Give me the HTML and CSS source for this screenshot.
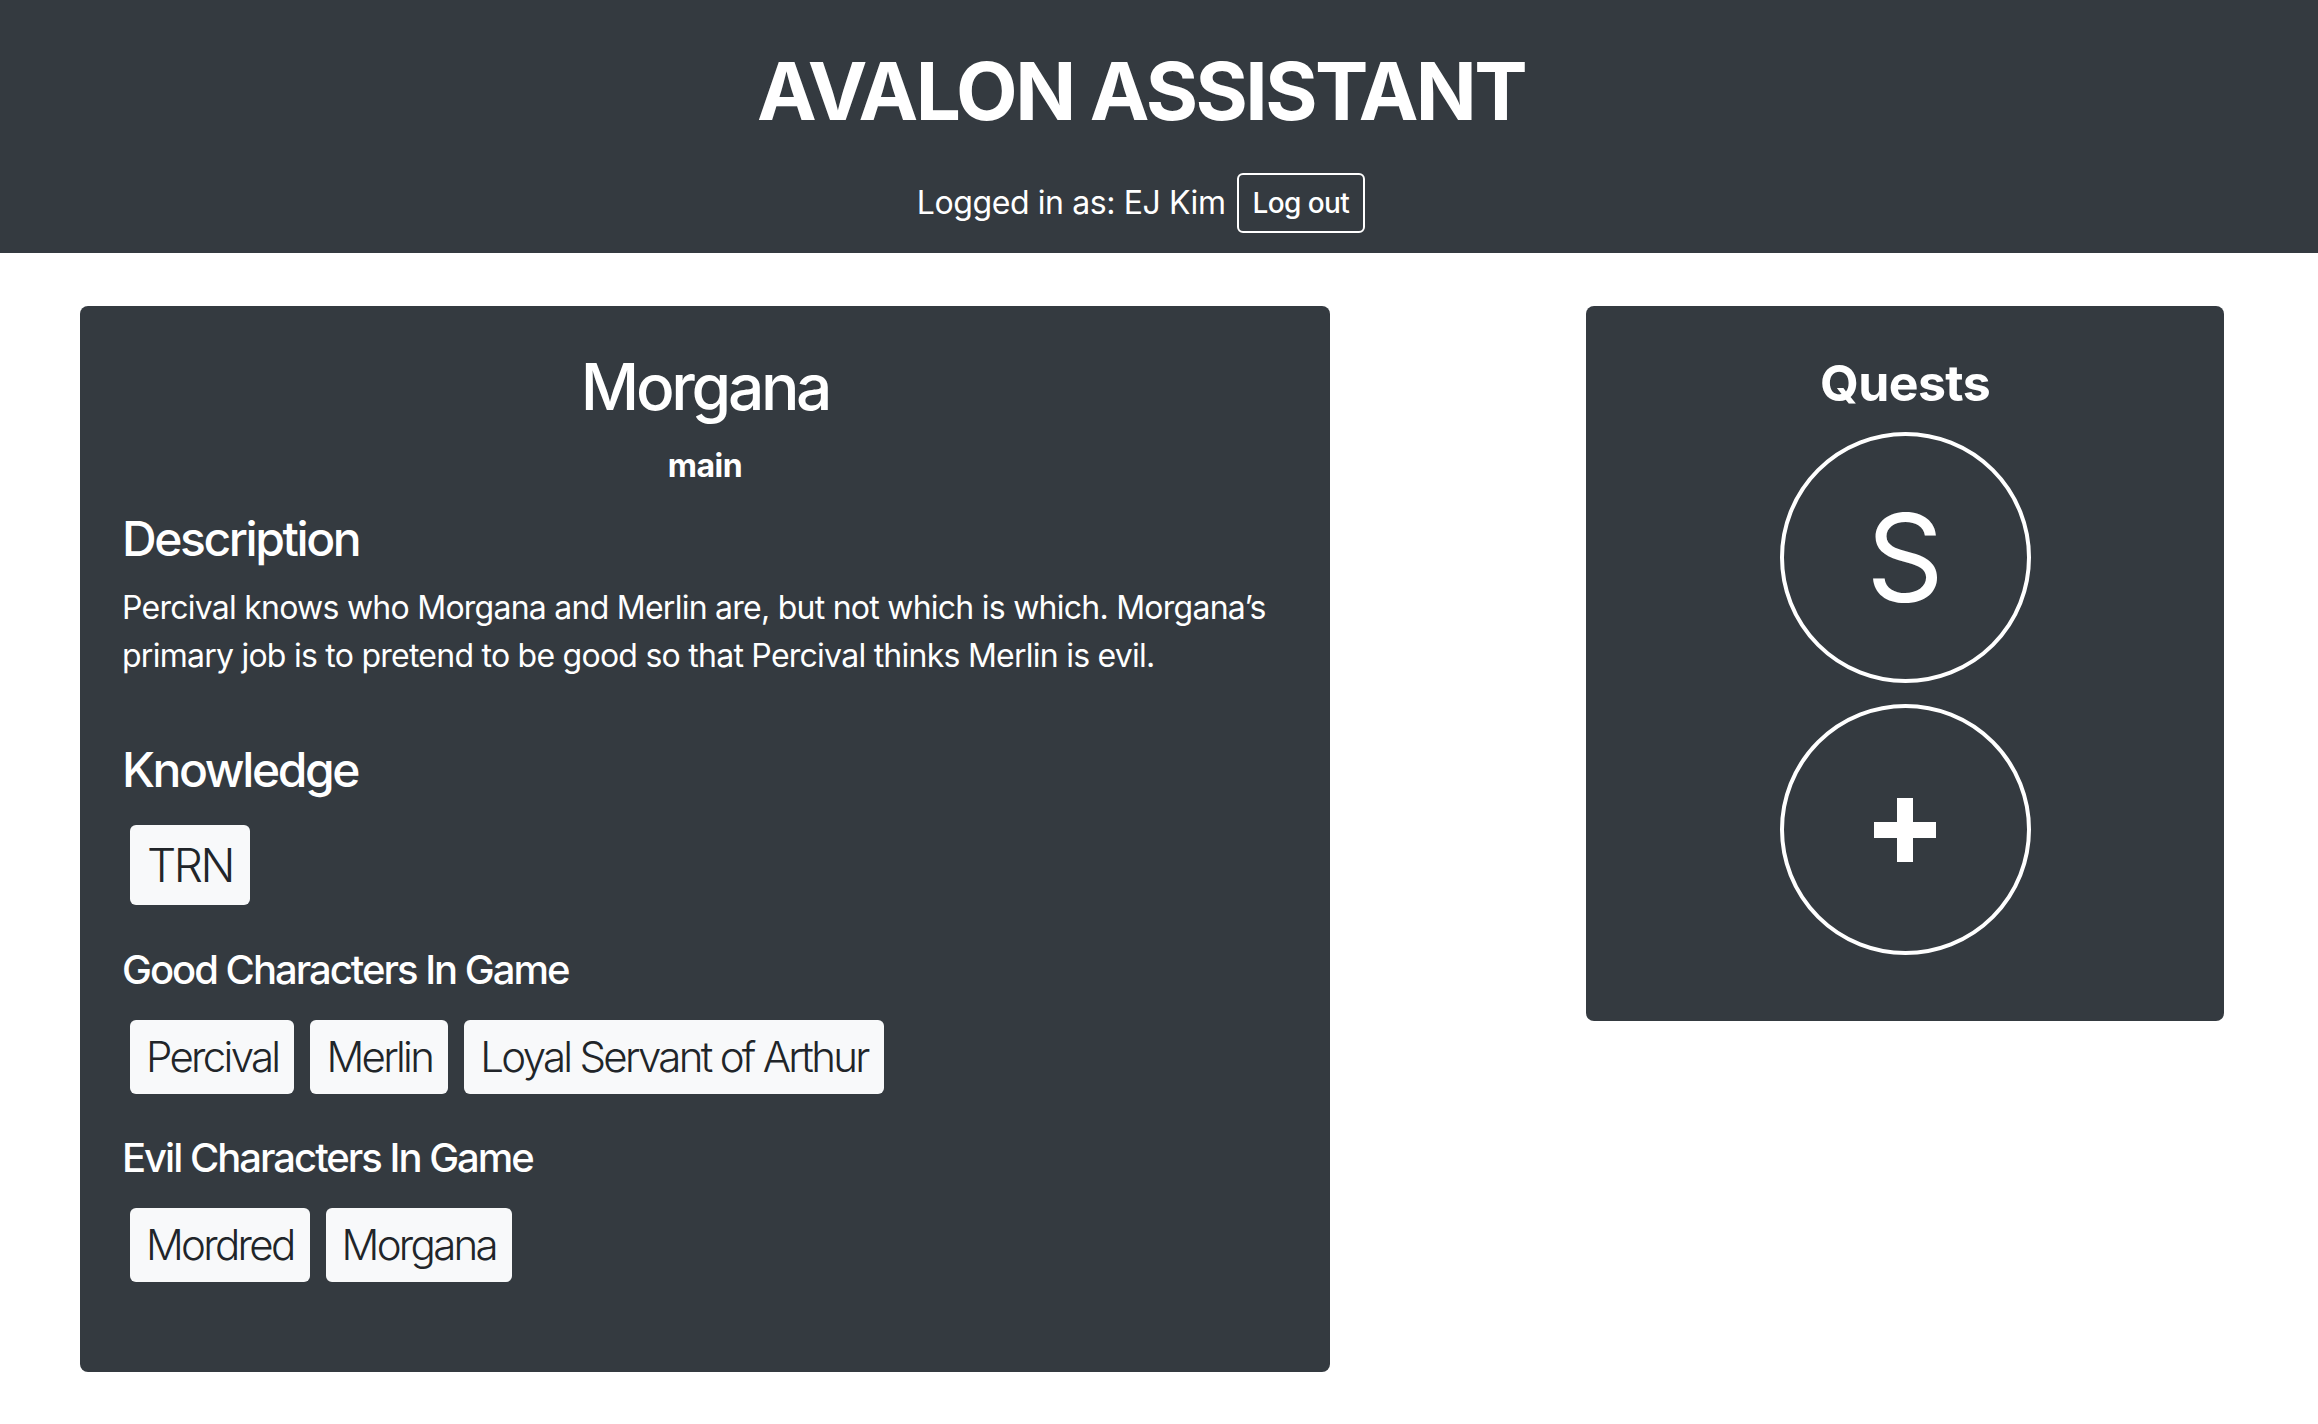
FILE: index.html
```html
<!DOCTYPE html>
<html lang="en">
<head>
<meta charset="utf-8">
<title>Avalon Assistant</title>
<link rel="stylesheet" href="styles.css">
</head>
<body>
<header class="topbar">
  <h1 class="app-title">AVALON ASSISTANT</h1>
  <div class="login-row">
    <span class="login-text">Logged in as: EJ Kim</span>
    <button class="logout-btn" type="button">Log out</button>
  </div>
</header>
<main class="layout">
  <section class="card role-card">
    <h2 class="role-name">Morgana</h2>
    <div class="role-sub">main</div>
    <h4 class="section-heading desc-heading">Description</h4>
    <p class="desc-text">Percival knows who Morgana and Merlin are, but not which is which. Morgana’s primary job is to pretend to be good so that Percival thinks Merlin is evil.</p>
    <h4 class="section-heading knowledge-heading">Knowledge</h4>
    <div class="badge-row knowledge-row">
      <span class="badge badge-tall">TRN</span>
    </div>
    <h5 class="group-heading good-heading">Good Characters In Game</h5>
    <div class="badge-row">
      <span class="badge">Percival</span>
      <span class="badge">Merlin</span>
      <span class="badge">Loyal Servant of Arthur</span>
    </div>
    <h5 class="group-heading evil-heading">Evil Characters In Game</h5>
    <div class="badge-row">
      <span class="badge">Mordred</span>
      <span class="badge">Morgana</span>
    </div>
  </section>
  <section class="card quest-card">
    <h3 class="quest-title">Quests</h3>
    <div class="quest-circle"><span class="quest-letter">S</span></div>
    <div class="quest-circle quest-add">
      <svg class="plus-icon" width="62" height="64" viewBox="0 0 62 64" aria-hidden="true">
        <rect x="23" y="0" width="16" height="64" fill="#fff"/>
        <rect x="0" y="24" width="62" height="16" fill="#fff"/>
      </svg>
    </div>
  </section>
</main>
</body>
</html>
```

FILE: styles.css
```css
html, body {
  margin: 0;
  padding: 0;
  background: #ffffff;
}

body {
  font-family: Inter, "Noto Sans", "Liberation Sans", sans-serif;
  color: #ffffff;
}

.topbar {
  background: #343a40;
  height: 253px;
  box-sizing: border-box;
  padding: 43px 36px 0 0;
  text-align: center;
}

.app-title {
  margin: 0;
  font-size: 80px;
  line-height: 1.2;
  font-weight: 700;
  letter-spacing: -2.6px;
}

.login-row {
  margin-top: 34px;
  display: flex;
  justify-content: center;
  align-items: center;
  gap: 11px;
}

.login-text {
  font-size: 32px;
  line-height: 1.5;
  font-weight: 400;
  letter-spacing: -0.4px;
}

.logout-btn {
  font-family: inherit;
  font-size: 28px;
  line-height: 1.5;
  font-weight: 500;
  letter-spacing: -0.6px;
  color: #ffffff;
  background: transparent;
  border: 2px solid #ffffff;
  border-radius: 6px;
  padding: 7px 14px;
  height: 60px;
}

.layout {
  display: grid;
  grid-template-columns: 1250px 638px;
  column-gap: 256px;
  align-items: start;
  padding: 53px 0 0 80px;
}

.card {
  background: #343a40;
  border-radius: 8px;
  box-sizing: border-box;
}

.role-card {
  height: 1066px;
  padding: 43px 42px 40px 42px;
}

.role-name {
  margin: 0;
  text-align: center;
  font-size: 64px;
  line-height: 1.2;
  font-weight: 500;
  letter-spacing: -3.3px;
}

.role-sub {
  margin-top: 16px;
  text-align: center;
  font-size: 32px;
  line-height: 1.5;
  font-weight: 700;
  letter-spacing: -0.5px;
}

.section-heading {
  margin: 0;
  font-size: 48px;
  line-height: 1.2;
  font-weight: 500;
  letter-spacing: -2.4px;
}

.desc-heading {
  margin-top: 20px;
}

.desc-text {
  margin: 17px 0 0 0;
  font-size: 32px;
  line-height: 1.5;
  font-weight: 400;
  letter-spacing: -0.75px;
}

.knowledge-heading {
  margin-top: 61px;
}

.badge-row {
  display: flex;
  flex-wrap: wrap;
  gap: 16px;
  margin-top: 26px;
  padding-left: 8px;
}

.badge {
  display: inline-block;
  background: #f8f9fa;
  color: #212529;
  font-size: 42px;
  line-height: 1;
  font-weight: 300;
  padding: 16px 16px;
  border-radius: 6px;
  letter-spacing: -2.7px;
}

.badge-tall {
  font-size: 46px;
  letter-spacing: -2.4px;
  padding: 17px 17px;
}

.group-heading {
  margin: 0;
  font-size: 40px;
  line-height: 1.2;
  font-weight: 500;
  letter-spacing: -2px;
}

.good-heading {
  margin-top: 41px;
}

.evil-heading {
  margin-top: 40px;
}

.quest-card {
  height: 715px;
  padding: 47px 40px 40px 40px;
  display: flex;
  flex-direction: column;
  align-items: center;
}

.quest-title {
  margin: 0;
  font-size: 50px;
  line-height: 1.2;
  font-weight: 700;
  letter-spacing: -0.6px;
}

.quest-circle {
  width: 251px;
  height: 251px;
  box-sizing: border-box;
  border: 4px solid #ffffff;
  border-radius: 50%;
  display: flex;
  align-items: center;
  justify-content: center;
  margin-top: 19px;
}

.quest-add {
  margin-top: 21px;
}

.quest-letter {
  font-size: 121px;
  line-height: 1;
  font-weight: 400;
}

.plus-icon {
  display: block;
}
```
